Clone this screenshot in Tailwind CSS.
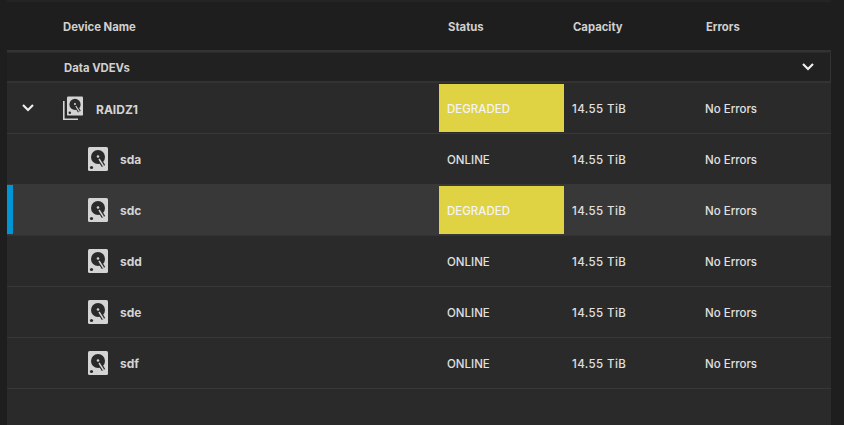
<!DOCTYPE html>
<html lang="en">
<head>
  <meta charset="UTF-8" />
  <title>Pool Status</title>
  <script src="https://cdn.jsdelivr.net/npm/@tailwindcss/browser@4"></script>
</head>
<body class="w-[844px] h-[425px] overflow-hidden bg-[#1e1e1e] font-['Inter',sans-serif] text-[11.5px] font-medium text-[#e0e0e0]">
  <svg width="0" height="0" class="absolute">
    <defs>
      <symbol id="disk" viewBox="0 0 20 24">
        <rect width="20" height="24" rx="1.500" fill="#d4d4d4"/>
        <circle cx="10" cy="10" r="7" fill="#2a2a2a"/>
        <path stroke="#2a2a2a" stroke-width="4" d="m10.500 11 5 8"/>
        <path stroke="#d4d4d4" stroke-width="1.400" d="m11 12 4.500 7"/>
        <circle cx="10" cy="9.500" r="1.300" fill="#d4d4d4"/>
        <circle cx="3.500" cy="20.500" r="1.600" fill="#2a2a2a"/>
      </symbol>
    </defs>
  </svg>

  <div class="h-[2px] bg-[#242424] ml-[7px] w-[824px]"></div>
  <div class="ml-[7px] w-[824px] h-[423px] bg-[#2a2a2a]">
    <!-- header -->
    <div class="h-[50px] pt-[2px] bg-[#1e1e1e] border-b-2 border-[#333333] flex items-center font-bold text-[11.3px] text-[#d0d0d0]">
      <div class="w-[432px] pl-[56px]">Device Name</div>
      <div class="w-[125px] pl-[9px]">Status</div>
      <div class="w-[133px] pl-[9px]">Capacity</div>
      <div class="pl-[9px]">Errors</div>
    </div>
    <!-- section -->
    <div class="h-[30px] mt-[1px] bg-[#212121] border-b-2 border-r border-[#333333] flex items-center justify-between font-bold text-[11.3px] text-[#d0d0d0]">
      <div class="pl-[57px] pt-[2px]">Data VDEVs</div>
      <svg class="mr-[14px]" width="16" height="16" viewBox="0 0 16 16" fill="none" stroke="#eeeeee" stroke-width="2.200"><path d="m3 5 5 5 5-5"/></svg>
    </div>
    <!-- vdev row -->
    <div class="h-[51px] flex items-center border-b border-[#383838]">
      <div class="w-[56px] pl-[13px]">
        <svg class="block" width="16" height="16" viewBox="0 0 16 16" fill="none" stroke="#eeeeee" stroke-width="2.200"><path d="m3 5 5 5 5-5"/></svg>
      </div>
      <div class="w-[376px] flex items-center gap-[13px] font-bold text-[12px] text-[#d4d4d4]">
        <svg class="block" width="20" height="24" viewBox="0 0 20 24">
          <path fill="none" stroke="#d4d4d4" stroke-width="1.600" d="M.8 5v18.200H15"/>
          <use href="#disk" x="4" y="0" width="16" height="20"/>
        </svg>
        <span class="pt-[4px]">RAIDZ1</span>
      </div>
      <div class="w-[125px] h-[48px] pl-[8px] pt-[3px] flex items-center bg-[#dfd343] text-[#f4f4f4]">DEGRADED</div>
      <div class="w-[133px] pl-[8px] pt-[4px] tracking-[0.4px]">14.55 TiB</div>
      <div class="pl-[8px] pt-[4px]">No Errors</div>
    </div>
    <!-- disks -->
    <div class="h-[51px] flex items-center border-b border-[#383838]">
      <div class="w-[432px] pl-[81px] flex items-center gap-[12px] font-bold text-[12px] text-[#d4d4d4]"><svg class="block" width="20" height="24"><use href="#disk"/></svg><span class="pt-[2px]">sda</span></div>
      <div class="w-[125px] pl-[8px] pt-[4px]">ONLINE</div>
      <div class="w-[133px] pl-[8px] pt-[4px] tracking-[0.4px]">14.55 TiB</div>
      <div class="pl-[8px] pt-[4px]">No Errors</div>
    </div>
    <div class="h-[51px] flex items-center border-b border-[#333333] bg-[#383838] relative">
      <div class="absolute left-0 top-0 bottom-[1px] w-[6px] bg-[#0095d5]"></div>
      <div class="w-[432px] pl-[81px] flex items-center gap-[12px] font-bold text-[12px] text-[#d4d4d4]"><svg class="block" width="20" height="24"><use href="#disk"/></svg><span class="pt-[2px]">sdc</span></div>
      <div class="w-[125px] h-[48px] pl-[8px] pt-[3px] flex items-center bg-[#dfd343] text-[#f4f4f4]">DEGRADED</div>
      <div class="w-[133px] pl-[8px] pt-[4px] tracking-[0.4px]">14.55 TiB</div>
      <div class="pl-[8px] pt-[4px]">No Errors</div>
    </div>
    <div class="h-[51px] flex items-center border-b border-[#383838]">
      <div class="w-[432px] pl-[81px] flex items-center gap-[12px] font-bold text-[12px] text-[#d4d4d4]"><svg class="block" width="20" height="24"><use href="#disk"/></svg><span class="pt-[2px]">sdd</span></div>
      <div class="w-[125px] pl-[8px] pt-[4px]">ONLINE</div>
      <div class="w-[133px] pl-[8px] pt-[4px] tracking-[0.4px]">14.55 TiB</div>
      <div class="pl-[8px] pt-[4px]">No Errors</div>
    </div>
    <div class="h-[51px] flex items-center border-b border-[#383838]">
      <div class="w-[432px] pl-[81px] flex items-center gap-[12px] font-bold text-[12px] text-[#d4d4d4]"><svg class="block" width="20" height="24"><use href="#disk"/></svg><span class="pt-[2px]">sde</span></div>
      <div class="w-[125px] pl-[8px] pt-[4px]">ONLINE</div>
      <div class="w-[133px] pl-[8px] pt-[4px] tracking-[0.4px]">14.55 TiB</div>
      <div class="pl-[8px] pt-[4px]">No Errors</div>
    </div>
    <div class="h-[51px] flex items-center border-b border-[#383838]">
      <div class="w-[432px] pl-[81px] flex items-center gap-[12px] font-bold text-[12px] text-[#d4d4d4]"><svg class="block" width="20" height="24"><use href="#disk"/></svg><span class="pt-[2px]">sdf</span></div>
      <div class="w-[125px] pl-[8px] pt-[4px]">ONLINE</div>
      <div class="w-[133px] pl-[8px] pt-[4px] tracking-[0.4px]">14.55 TiB</div>
      <div class="pl-[8px] pt-[4px]">No Errors</div>
    </div>
  </div>
</body>
</html>
